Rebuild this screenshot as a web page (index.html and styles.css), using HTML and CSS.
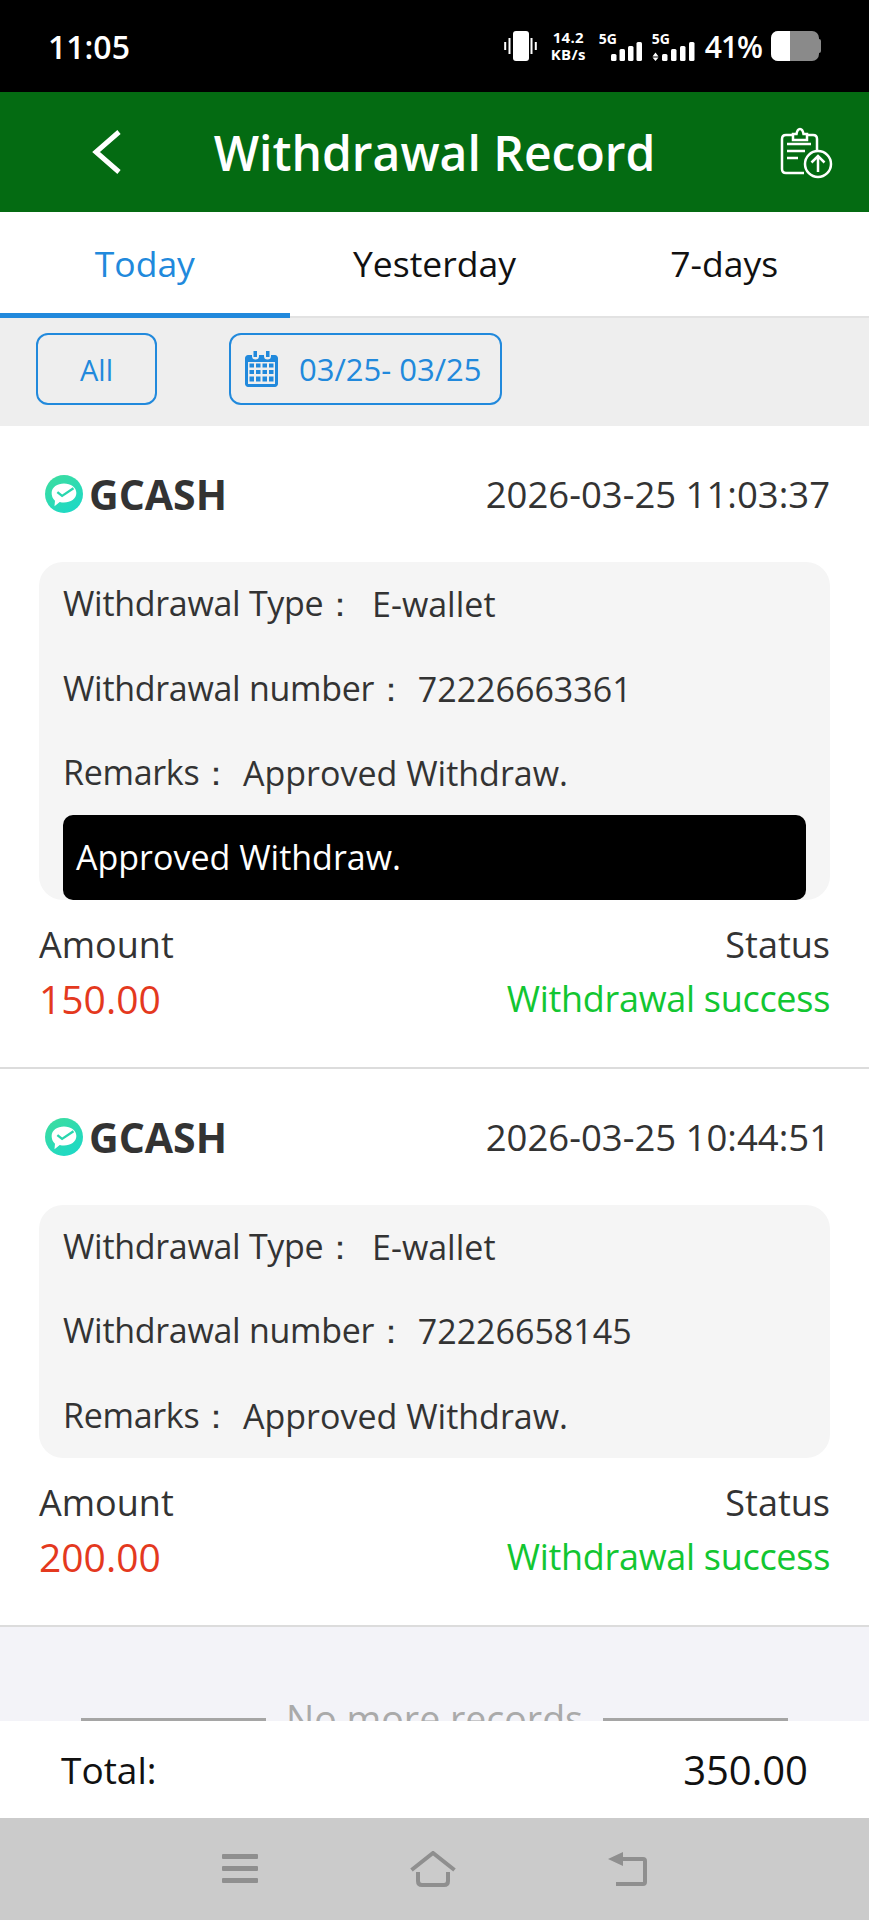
FILE: index.html
```html
<!DOCTYPE html>
<html lang="en">
<head>
  <meta charset="UTF-8">
  <meta name="viewport" content="width=device-width, initial-scale=1.0">
  <title>Withdrawal Record</title>
  <link rel="stylesheet" href="styles.css">
</head>
<body>
  <div class="phone">
    <div class="status-bar">
      <span class="clock">11:05</span>
      <div class="status-right">
        <svg width="33" height="30" viewBox="0 0 33 30"><rect x="9" y="0" width="16" height="30" rx="3" fill="#fff"/><path d="M1.2 11v8M5.5 7v16M27.5 7v16M31.8 11v8" stroke="#fff" stroke-width="2"/></svg>
        <div class="speed"><span>14.2</span><span>KB/s</span></div>
        <div class="signal">
          <span class="net">5G</span>
          <svg width="43" height="19" viewBox="0 0 43 19"><g fill="#fff"><rect x="12" y="12" width="5.5" height="7" rx="1.5"/><rect x="20.5" y="7" width="5.5" height="12" rx="1.5"/><rect x="29" y="4" width="5.5" height="15" rx="1.5"/><rect x="37.5" y="0" width="5.5" height="19" rx="1.5"/></g></svg>
        </div>
        <div class="signal">
          <span class="net">5G</span>
          <svg width="43" height="19" viewBox="0 0 43 19"><g fill="#fff"><path d="M0.5 14.5l3-4 3 4zM0.5 15.5l3 3.5 3-3.5z"/><rect x="10" y="12" width="5.5" height="7" rx="1.5"/><rect x="19" y="7" width="5.5" height="12" rx="1.5"/><rect x="28" y="4" width="5.5" height="15" rx="1.5"/><rect x="37" y="0" width="5.5" height="19" rx="1.5"/></g></svg>
        </div>
        <span class="battery-pct">41%</span>
        <div class="battery"><div class="battery-fill"></div></div>
      </div>
    </div>

    <div class="title-bar">
      <div class="title-side title-left">
        <svg width="30" height="46" viewBox="0 0 30 46"><path d="M27 3L4 23l23 20" fill="none" stroke="#fff" stroke-width="5"/></svg>
      </div>
      <h1>Withdrawal Record</h1>
      <div class="title-side title-right">
        <svg width="57" height="58" viewBox="0 0 57 58" fill="none" stroke="#fff" stroke-width="2.5"><path d="M15 12H8q-4 0-4 4v30q0 4 4 4h18M30 12h5q4 0 4 4v12"/><path d="M15 17v-6h3.5c.5-3 2-5 3.5-5s3 2 3.5 5H29v6z"/><path d="M9 21h24M9 28h18M9 35h11"/><circle cx="40" cy="41" r="13"/><path d="M40 49V33M33.5 39.5L40 33l6.5 6.5"/></svg>
      </div>
    </div>

    <div class="tabs">
      <div class="tab tab-active">Today</div>
      <div class="tab">Yesterday</div>
      <div class="tab">7-days</div>
    </div>

    <div class="filter-bar">
      <div class="chip chip-all">All</div>
      <div class="chip chip-date">
        <svg width="33" height="36" viewBox="0 0 33 36"><path fill="#2189dc" d="M3 4h4v1a3.5 3.5 0 0 0 7 0V4h5v1a3.5 3.5 0 0 0 7 0V4h4c1.5 0 3 1.5 3 3v26c0 1.5-1.5 3-3 3H3c-1.5 0-3-1.5-3-3V7c0-1.500 1.500-3 3-3z"/><path fill="#2189dc" d="M8.5 0h3.5v6H8.5zM21 0h3.5v6H21z"/><rect x="3" y="11" width="27" height="22" fill="#eee"/><g fill="#2189dc"><rect x="4.5" y="12.5" width="4.5" height="4"/><rect x="11" y="12.5" width="4.5" height="4"/><rect x="17.5" y="12.5" width="4.5" height="4"/><rect x="24" y="12.5" width="4.5" height="4"/><rect x="4.5" y="19" width="4.5" height="4"/><rect x="11" y="19" width="4.5" height="4"/><rect x="17.5" y="19" width="4.5" height="4"/><rect x="24" y="19" width="4.5" height="4"/><rect x="4.5" y="25.5" width="4.5" height="5"/><rect x="11" y="25.5" width="4.5" height="5"/><rect x="17.5" y="25.5" width="4.5" height="5"/><rect x="24" y="25.5" width="4.5" height="5"/></g></svg>
        <span>03/25- 03/25</span>
      </div>
    </div>

    <div class="record">
      <div class="record-head">
        <div class="brand">
          <svg width="38" height="38" viewBox="0 0 40 40"><defs><linearGradient id="g1" x1="0" y1="0" x2="0.6" y2="1"><stop offset="0" stop-color="#3fdd9c"/><stop offset="1" stop-color="#1fd9c4"/></linearGradient></defs><circle cx="20" cy="20" r="20" fill="url(#g1)"/><path d="M7 19c0-6 6-10 13-10s13 4 13 10-6 10-13 10c-1.5 0-3 0-4.5-.5L10 33l.5-6C8 25 7 22 7 19z" fill="#fff"/><path d="M13 18l5 4 12-8" fill="none" stroke="#28d6ae" stroke-width="2.5"/></svg>
          <span>GCASH</span>
        </div>
        <span class="stamp">2026-03-25 11:03:37</span>
      </div>
      <div class="detail">
        <div class="detail-row"><span class="key">Withdrawal Type：</span><span class="val">E-wallet</span></div>
        <div class="detail-row"><span class="key">Withdrawal number：</span><span class="val">72226663361</span></div>
        <div class="detail-row"><span class="key">Remarks：</span><span class="val">Approved Withdraw.</span></div>
        <div class="tooltip">Approved Withdraw.</div>
      </div>
      <div class="money">
        <div><div class="lbl">Amount</div><div class="amount">150.00</div></div>
        <div class="right"><div class="lbl">Status</div><div class="status">Withdrawal success</div></div>
      </div>
    </div>

    <div class="record">
      <div class="record-head">
        <div class="brand">
          <svg width="38" height="38" viewBox="0 0 40 40"><circle cx="20" cy="20" r="20" fill="url(#g1)"/><path d="M7 19c0-6 6-10 13-10s13 4 13 10-6 10-13 10c-1.5 0-3 0-4.5-.5L10 33l.5-6C8 25 7 22 7 19z" fill="#fff"/><path d="M13 18l5 4 12-8" fill="none" stroke="#28d6ae" stroke-width="2.5"/></svg>
          <span>GCASH</span>
        </div>
        <span class="stamp">2026-03-25 10:44:51</span>
      </div>
      <div class="detail">
        <div class="detail-row"><span class="key">Withdrawal Type：</span><span class="val">E-wallet</span></div>
        <div class="detail-row"><span class="key">Withdrawal number：</span><span class="val">72226658145</span></div>
        <div class="detail-row"><span class="key">Remarks：</span><span class="val">Approved Withdraw.</span></div>
      </div>
      <div class="money">
        <div><div class="lbl">Amount</div><div class="amount">200.00</div></div>
        <div class="right"><div class="lbl">Status</div><div class="status">Withdrawal success</div></div>
      </div>
    </div>

    <div class="no-more">
      <i></i><span>No more records</span><i></i>
    </div>

    <div class="total-bar">
      <span>Total:</span>
      <span class="total-num">350.00</span>
    </div>

    <div class="nav-bar">
      <svg width="36" height="29" viewBox="0 0 36 29" fill="#8f8f8f"><rect y="0" width="36" height="5" rx="1"/><rect y="12" width="36" height="5" rx="1"/><rect y="24" width="36" height="5" rx="1"/></svg>
      <svg width="46" height="36" viewBox="0 0 46 36" fill="none" stroke="#8f8f8f" stroke-width="4"><path d="M1.5 19L23 2l21.5 17"/><path d="M8 21v9c0 2.5 1.5 4 4 4h22c2.5 0 4-1.5 4-4v-9"/></svg>
      <svg width="39" height="34" viewBox="0 0 39 34" fill="none" stroke="#8f8f8f" stroke-width="4"><path d="M14 7h21q2 0 2 2v21q0 2-2 2H8"/><path d="M15 0v14L0 7z" fill="#8f8f8f" stroke="none"/></svg>
    </div>
  </div>
</body>
</html>
```

FILE: styles.css
```css
* {
  box-sizing: border-box;
}

body {
  margin: 0;
  background-color: #f3f3f8;
  font-family: "Open Sans", "Noto Sans", sans-serif;
}

.phone {
  width: 869px;
  height: 1920px;
  display: flex;
  flex-direction: column;
  overflow: hidden;
  background-color: #f3f3f8;
}

.status-bar {
  height: 92px;
  flex: none;
  background-color: #000;
  color: #fff;
  display: flex;
  align-items: center;
  justify-content: space-between;
  padding: 0 48px 0 48px;
}

.clock {
  font-size: 32px;
  font-weight: 600;
}

.status-right {
  display: flex;
  align-items: center;
  gap: 9px;
}

.speed {
  display: flex;
  flex-direction: column;
  font-size: 15px;
  line-height: 17px;
  letter-spacing: 0.3px;
  font-weight: 700;
  align-items: center;
  width: 35px;
  margin: 0 4px 0 5px;
}

.signal {
  position: relative;
  height: 30px;
  width: 43px;
  margin-right: 1px;
  display: flex;
  align-items: flex-end;
}

.net {
  position: absolute;
  top: 0;
  left: 0;
  font-size: 14px;
  line-height: 15px;
  font-weight: 700;
}

.battery-pct {
  font-size: 30px;
  font-weight: 600;
  letter-spacing: -1px;
}

.battery {
  position: relative;
  width: 48px;
  height: 30px;
  margin-right: 2px;
  border-radius: 7px;
  background-color: #8a8a8a;
}

.battery::after {
  content: '';
  position: absolute;
  top: 8px;
  right: -2px;
  width: 2px;
  height: 14px;
  border-radius: 0 2px 2px 0;
  background-color: #8a8a8a;
}

.battery-fill {
  width: 19px;
  height: 100%;
  border-radius: 7px 0 0 7px;
  background-color: #fff;
}

.title-bar {
  height: 120px;
  flex: none;
  background-color: #046b12;
  display: flex;
  align-items: center;
  padding: 0 34px;
  color: #fff;
}

.title-side {
  width: 90px;
  display: flex;
  align-items: center;
}

.title-left {
  padding-left: 58px;
}

.title-right {
  justify-content: flex-end;
}

.title-bar h1 {
  flex: 1;
  margin: 0;
  text-align: center;
  font-size: 48px;
  font-weight: 600;
}

.tabs {
  height: 106px;
  flex: none;
  background-color: #fff;
  display: flex;
  border-bottom: 2px solid #e2e2e2;
}

.tab {
  flex: 1;
  display: flex;
  align-items: center;
  justify-content: center;
  font-size: 35.5px;
  color: #111;
  padding-bottom: 2px;
}

.tab-active {
  color: #2189dc;
  border-bottom: 5px solid #2189dc;
  margin-bottom: -2px;
  padding-bottom: 0;
}

.filter-bar {
  height: 108px;
  flex: none;
  background-color: #eeeeee;
  display: flex;
  align-items: center;
  gap: 72px;
  padding: 0 36px 6px;
}

.chip {
  height: 72px;
  border: 2px solid #2189dc;
  border-radius: 12px;
  color: #2189dc;
  font-size: 29px;
  display: flex;
  align-items: center;
  justify-content: center;
}

.chip-all {
  width: 121px;
}

.chip-date {
  width: 273px;
  gap: 21px;
  padding-left: 14px;
  justify-content: flex-start;
  font-size: 31px;
}

.record {
  flex: none;
  background-color: #fff;
  padding: 0 39px 41px;
  border-bottom: 2px solid #dcdcdc;
}

.record-head {
  height: 136px;
  display: flex;
  align-items: center;
  justify-content: space-between;
}

.brand {
  display: flex;
  align-items: center;
  gap: 6px;
  font-size: 41px;
  font-weight: 700;
  color: #333;
  margin-left: 6px;
}

.stamp {
  font-size: 36.5px;
  color: #333;
}

.detail {
  background-color: #f5f5f5;
  border-radius: 24px;
  padding: 0 24px;
  font-size: 34px;
  color: #333;
}

.detail-row {
  height: 84.5px;
  display: flex;
  align-items: center;
}

.key {
  letter-spacing: -0.3px;
}

.val {
  margin-left: 10px;
}

.detail-row:first-child .val {
  margin-left: 15px;
}

.tooltip {
  height: 85px;
  margin-top: -1px;
  background-color: #000;
  color: #fff;
  border-radius: 10px;
  display: flex;
  align-items: center;
  padding-left: 13px;
}

.money {
  display: flex;
  justify-content: space-between;
  padding-top: 18px;
  font-size: 36px;
  line-height: 54px;
}

.lbl {
  color: #333;
}

.right {
  text-align: right;
}

.amount {
  font-size: 39px;
  color: #e4391e;
}

.status {
  color: #12c631;
  letter-spacing: -0.3px;
}

.no-more {
  flex: 1;
  min-height: 0;
  display: flex;
  align-items: flex-start;
  justify-content: center;
  gap: 20px;
  padding-top: 66px;
  color: #aaa;
  font-size: 37.5px;
  overflow: hidden;
}

.no-more i {
  width: 185px;
  height: 3px;
  margin-top: 25px;
  background-color: #a5a5a5;
}

.total-bar {
  height: 97px;
  flex: none;
  background-color: #fff;
  display: flex;
  align-items: center;
  justify-content: space-between;
  padding: 0 61px;
  font-size: 37px;
  color: #111;
}

.total-num {
  font-size: 40px;
}

.nav-bar {
  height: 102px;
  flex: none;
  background-color: #cbcbcb;
  display: flex;
  align-items: center;
  justify-content: center;
  gap: 152px;
  padding-bottom: 1px;
}
```
